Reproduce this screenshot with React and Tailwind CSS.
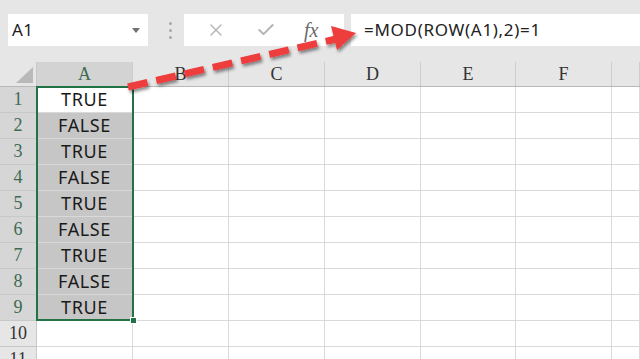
import { X, Check } from "lucide-react";

const columns = [
  { name: "A", w: "w-[96px]" },
  { name: "B", w: "w-[96px]" },
  { name: "C", w: "w-[96px]" },
  { name: "D", w: "w-[96px]" },
  { name: "E", w: "w-[95px]" },
  { name: "F", w: "w-[96px]" },
  { name: "", w: "flex-1" },
];

const values = ["TRUE", "FALSE", "TRUE", "FALSE", "TRUE", "FALSE", "TRUE", "FALSE", "TRUE"];
const rows = [1, 2, 3, 4, 5, 6, 7, 8, 9, 10, 11];

function Toolbar() {
  return (
    <div className="h-[62px] pt-[14px] flex items-start">
      {/* name box */}
      <div className="ml-[8px] w-[140px] h-[32px] bg-white flex items-center justify-between pl-[4px] pr-[8px]">
        <span className="text-[17px] tracking-[0.5px] text-[#222]" style={{ fontFamily: "'Noto Sans', sans-serif" }}>A1</span>
        <span className="w-0 h-0 border-l-[4px] border-r-[4px] border-t-[5px] border-l-transparent border-r-transparent border-t-[#707070]" />
      </div>
      <div className="w-[44px] h-[32px] flex flex-col items-center justify-center gap-[4px]">
        <span className="w-[3px] h-[3px] rounded-full bg-[#a8a8a8]" />
        <span className="w-[3px] h-[3px] rounded-full bg-[#a8a8a8]" />
        <span className="w-[3px] h-[3px] rounded-full bg-[#a8a8a8]" />
      </div>
      {/* fx buttons */}
      <div className="-ml-[8px] w-[160px] h-[32px] bg-white flex items-center">
        <X className="ml-[22px] text-[#b4b4b4]" size={20} strokeWidth={1.6} />
        <Check className="ml-[30px] text-[#b4b4b4]" size={20} strokeWidth={2.4} />
        <span className="ml-[28px] text-[20px] italic text-[#6a6a6a]" style={{ fontFamily: "'Liberation Serif', serif" }}>fx</span>
      </div>
      {/* formula */}
      <div className="ml-[7px] flex-1 h-[32px] bg-white flex items-center pl-[13px]">
        <span className="text-[17px] tracking-[0.7px] text-[#222]" style={{ fontFamily: "'Noto Sans', sans-serif" }}>=MOD(ROW(A1),2)=1</span>
      </div>
    </div>
  );
}

function HeaderRow() {
  return (
    <div className="h-[25px] flex border-b border-[#b8b8b8]" style={{ fontFamily: "'Liberation Serif', serif" }}>
      <div className="w-[37px] h-full relative border-r border-[#c8c8c8]">
        <div className="absolute right-[3px] bottom-[3px] w-0 h-0 border-l-[17px] border-l-transparent" style={{ borderBottom: "16px solid #b9b9b9" }} />
      </div>
      {columns.map((c, i) => (
        <div
          key={i}
          className={`${c.w} h-full flex items-center justify-center text-[18px] border-r border-[#cdcdcd] ${i === 0 ? "bg-[#d3d3d3] text-[#3d6b52]" : "text-[#333]"}`}
        >
          {c.name}
        </div>
      ))}
    </div>
  );
}

function Row({ n }) {
  const sel = n <= 9;
  const v = values[n - 1];
  return (
    <div className="h-[26px] flex">
      <div
        className={`w-[37px] h-full flex items-center justify-center text-[18px] border-r border-b border-[#c8c8c8] ${sel ? "bg-[#d6d6d6] text-[#3d6b52]" : "bg-[#e6e6e6] text-[#333]"}`}
        style={{ fontFamily: "'Liberation Serif', serif" }}
      >
        {n}
      </div>
      {columns.map((c, i) => (
        <div
          key={i}
          className={`${c.w} h-full flex items-center justify-center border-r border-b border-[#d9d9d9] text-[18px] tracking-[0.6px] text-[#1a1a1a] ${i === 0 && sel && n > 1 ? "bg-[#c6c6c6] border-[#b9b9b9]" : "bg-white"}`}
          style={{ fontFamily: "'Noto Sans', sans-serif" }}
        >
          {i === 0 && v}
        </div>
      ))}
    </div>
  );
}

function Arrow() {
  return (
    <svg className="absolute inset-0 pointer-events-none" width="640" height="359">
      <defs>
        <filter id="sh" x="-10%" y="-50%" width="120%" height="200%">
          <feDropShadow dx="1.5" dy="2.5" stdDeviation="1.5" floodColor="#000" floodOpacity="0.45" />
        </filter>
      </defs>
      <g filter="url(#sh)">
        <line x1="128" y1="87" x2="336" y2="39" stroke="#ee3c3c" strokeWidth="7" strokeDasharray="20 9" />
        <polygon points="356,33 331,26 337,50" fill="#ee3c3c" />
      </g>
    </svg>
  );
}

export default function App() {
  return (
    <div className="w-[640px] h-[359px] bg-[#e6e6e6] overflow-hidden relative">
      <Toolbar />
      <HeaderRow />
      {rows.map((n) => (
        <Row key={n} n={n} />
      ))}
      {/* selection */}
      <div className="absolute left-[36px] top-[86px] w-[98px] h-[235px] border-2 border-[#217346] pointer-events-none">
        <div className="absolute -right-[5px] -bottom-[5px] w-[7px] h-[7px] bg-[#217346] border border-white" />
      </div>
      <Arrow />
    </div>
  );
}
